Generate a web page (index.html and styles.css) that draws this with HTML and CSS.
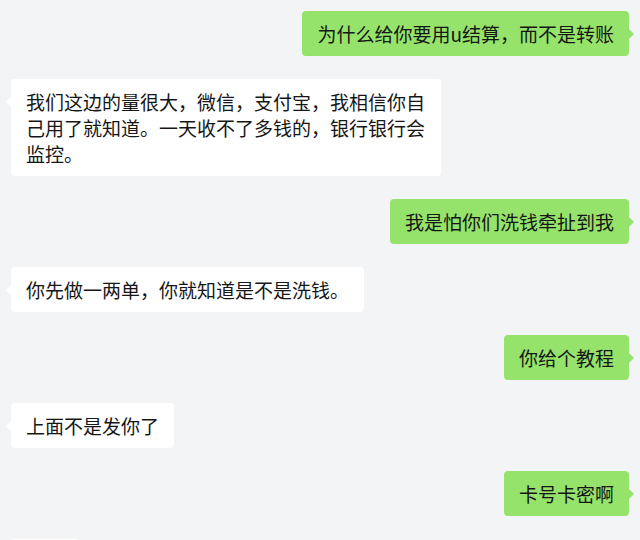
FILE: index.html
```html
<!DOCTYPE html>
<html lang="zh-CN">
<head>
<meta charset="utf-8">
<title>聊天记录</title>
<link rel="stylesheet" href="styles.css">
</head>
<body>
<div class="chat">
  <div class="row row-right"><div class="bubble bubble-me">为什么给你要用u结算，而不是转账</div></div>
  <div class="row row-left"><div class="bubble bubble-other">我们这边的量很大，微信，支付宝，我相信你自己用了就知道。一天收不了多钱的，银行银行会监控。</div></div>
  <div class="row row-right"><div class="bubble bubble-me">我是怕你们洗钱牵扯到我</div></div>
  <div class="row row-left"><div class="bubble bubble-other">你先做一两单，你就知道是不是洗钱。</div></div>
  <div class="row row-right"><div class="bubble bubble-me">你给个教程</div></div>
  <div class="row row-left"><div class="bubble bubble-other">上面不是发你了</div></div>
  <div class="row row-right"><div class="bubble bubble-me">卡号卡密啊</div></div>
  <div class="row row-left"><div class="bubble bubble-other bubble-stub"></div></div>
</div>
</body>
</html>
```
FILE: styles.css
```css
html, body {
  margin: 0;
  padding: 0;
  background: #f3f4f6;
}
body {
  width: 640px;
  height: 540px;
  overflow: hidden;
  font-family: "Noto Sans CJK SC", "Noto Sans", sans-serif;
}
.chat {
  display: flex;
  flex-direction: column;
  gap: 23px;
  padding: 11px 11px 0 11px;
}
.row {
  display: flex;
}
.row-right {
  justify-content: flex-end;
}
.row-left {
  justify-content: flex-start;
}
.bubble {
  position: relative;
  font-size: 19px;
  line-height: 26px;
  color: #161616;
  padding: 10px 15px 9px 15px;
  border-radius: 4px;
  max-width: 400px;
  word-break: break-all;
}
.bubble-me {
  background: #95e36a;
}
.bubble-other {
  background: #ffffff;
}
.bubble-stub {
  width: 38px;
  height: 26px;
}
.bubble-me::after {
  content: "";
  position: absolute;
  right: -5px;
  top: 18px;
  border-top: 5px solid transparent;
  border-bottom: 5px solid transparent;
  border-left: 5px solid #95e36a;
}
.bubble-other::after {
  content: "";
  position: absolute;
  left: -5px;
  top: 18px;
  border-top: 5px solid transparent;
  border-bottom: 5px solid transparent;
  border-right: 5px solid #ffffff;
}
```
